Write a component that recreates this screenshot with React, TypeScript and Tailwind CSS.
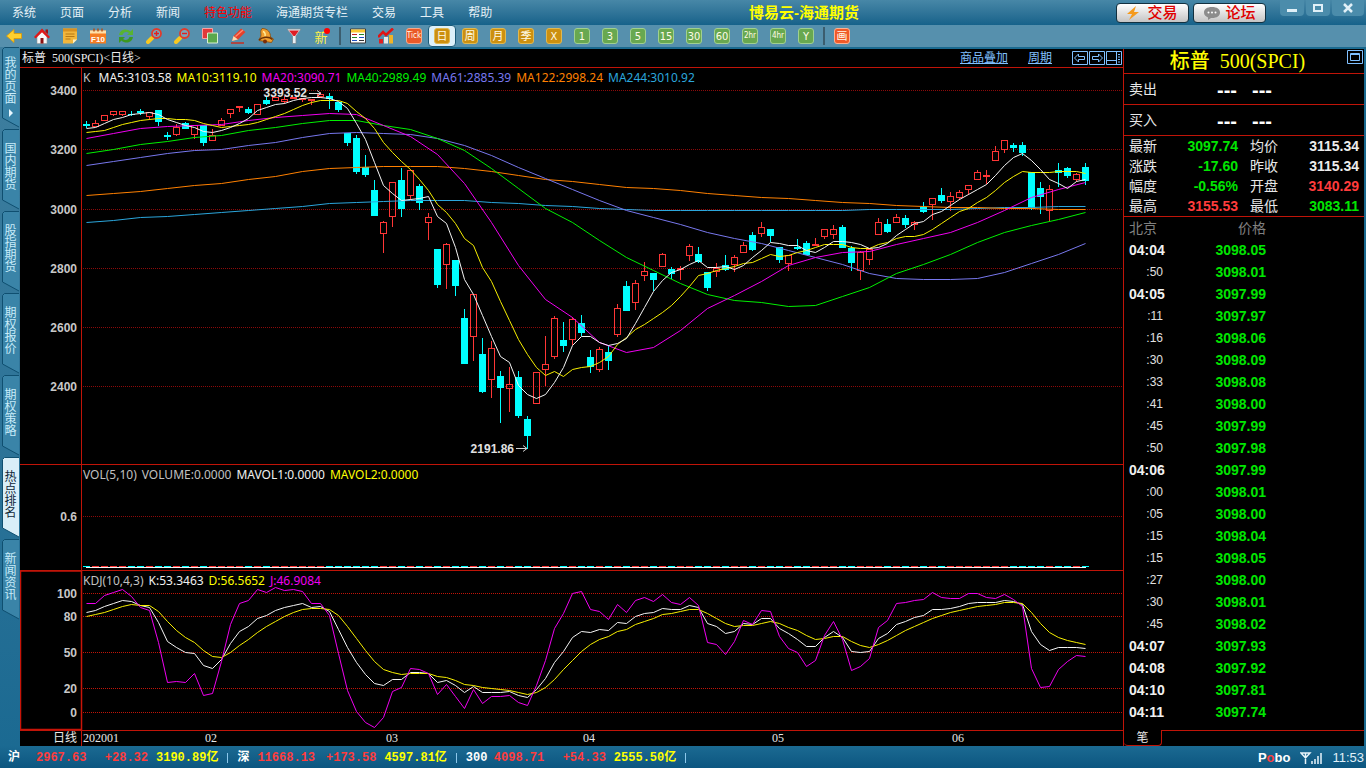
import type { ReactNode } from 'react'

const MENU = ['系统', '页面', '分析', '新闻', '特色功能', '海通期货专栏', '交易', '工具', '帮助']
const SIDE_TABS = ['我的页面', '国内期货', '股指期货', '期权报价', '期权策略', '热点排名', '新闻资讯']

// [body top, body bottom, high, low, rising]
const CANDLES: number[][] = [
  [124, 126, 121, 128, 0], [123, 126, 120, 126, 1], [115, 120, 115, 120, 1], [111, 114, 111, 115, 1],
  [111, 114, 111, 115, 1], [114, 115, 111, 116, 0], [111, 113, 109, 115, 0], [112, 116, 112, 119, 1],
  [110, 122, 110, 126, 0], [135, 137, 132, 140, 0], [127, 134, 124, 135, 1], [123, 129, 122, 129, 0],
  [125, 134, 125, 138, 1], [125, 143, 125, 146, 0], [135, 140, 129, 140, 1], [120, 125, 118, 125, 1],
  [109, 113, 109, 117, 1], [106, 107, 106, 111, 1], [109, 113, 107, 114, 0], [104, 114, 104, 114, 1],
  [100, 104, 97, 105, 0], [97, 100, 97, 100, 1], [99, 101, 96, 103, 1], [97, 98, 97, 98, 1],
  [98, 99, 98, 101, 1], [99, 100, 99, 104, 1], [94, 96, 92, 97, 1], [96, 99, 93, 109, 0],
  [102, 110, 102, 112, 0], [133, 143, 133, 146, 0], [138, 172, 135, 174, 0], [167, 175, 155, 177, 0],
  [190, 216, 180, 216, 0], [222, 233, 221, 252, 1], [182, 216, 182, 226, 1], [180, 209, 168, 217, 0],
  [170, 195, 170, 199, 1], [186, 203, 184, 210, 0], [217, 222, 213, 239, 1], [249, 285, 249, 288, 0],
  [244, 264, 243, 288, 1], [260, 286, 260, 296, 0], [318, 364, 309, 364, 0], [294, 336, 294, 360, 1],
  [354, 392, 338, 393, 0], [348, 379, 341, 397, 1], [376, 388, 371, 423, 0], [384, 388, 367, 411, 1],
  [377, 416, 371, 418, 0], [419, 436, 416, 449, 0], [372, 403, 372, 403, 1], [364, 369, 336, 385, 1],
  [318, 356, 316, 358, 1], [340, 346, 322, 352, 0], [319, 339, 317, 344, 1], [323, 333, 315, 336, 0],
  [357, 367, 350, 373, 0], [349, 369, 347, 371, 1], [352, 361, 345, 370, 0], [308, 334, 304, 336, 1],
  [286, 311, 281, 311, 0], [283, 302, 280, 309, 1], [271, 275, 262, 280, 1], [273, 280, 273, 291, 0],
  [254, 266, 253, 266, 1], [269, 274, 267, 279, 0], [268, 269, 266, 279, 1], [246, 255, 244, 260, 1],
  [254, 262, 247, 263, 0], [272, 288, 272, 291, 0], [268, 271, 263, 276, 1], [265, 270, 255, 271, 0],
  [257, 264, 255, 271, 1], [245, 252, 242, 252, 1], [235, 250, 232, 251, 0], [227, 233, 222, 236, 1],
  [229, 236, 229, 242, 0], [247, 260, 247, 263, 0], [255, 263, 255, 270, 1], [247, 249, 239, 250, 0],
  [243, 255, 241, 255, 0], [244, 245, 238, 245, 1], [229, 236, 229, 238, 1], [229, 234, 225, 238, 1],
  [227, 248, 225, 248, 0], [248, 263, 246, 271, 0], [252, 270, 251, 279, 1], [249, 259, 249, 264, 1],
  [222, 234, 218, 234, 1], [224, 232, 219, 233, 0], [217, 222, 214, 222, 1], [218, 225, 215, 228, 0],
  [222, 224, 221, 229, 1], [207, 212, 202, 213, 0], [198, 204, 198, 219, 1], [195, 201, 188, 203, 0],
  [196, 201, 192, 210, 1], [192, 197, 190, 199, 1], [185, 189, 185, 194, 1], [172, 179, 170, 179, 1],
  [175, 176, 170, 183, 1], [151, 160, 146, 160, 1], [140, 149, 140, 152, 1], [145, 148, 143, 152, 0],
  [145, 153, 142, 156, 0], [172, 209, 172, 210, 0], [188, 197, 182, 214, 0], [189, 210, 185, 220, 1],
  [170, 173, 163, 187, 0], [168, 176, 167, 178, 0], [174, 179, 173, 181, 1], [167, 181, 163, 185, 0],
]

const MA5 = [
  128, 127, 123, 119, 117, 114, 113, 112, 114, 119, 122, 125, 127, 131, 132, 130, 127, 123, 118, 110, 107, 104, 103,
  100, 98, 97, 97, 98, 101, 108, 123, 139, 162, 185, 193, 200, 199, 198, 196, 216, 223, 247, 279, 294, 315, 336, 356,
  362, 385, 394, 398, 394, 382, 367, 345, 336, 336, 342, 345, 343, 338, 323, 307, 291, 280, 272, 269, 264, 260, 267,
  267, 266, 269, 265, 257, 250, 242, 243, 245, 245, 250, 252, 247, 241, 241, 242, 244, 248, 247, 243, 235, 229, 223,
  221, 214, 211, 205, 199, 194, 189, 184, 175, 165, 157, 153, 160, 169, 179, 183, 188, 181, 179,
]
const MA10 = [
  132, 131, 130, 127, 124, 122, 120, 119, 118, 118, 119, 119, 120, 123, 125, 127, 126, 125, 124, 122, 119, 116, 113,
  109, 105, 102, 100, 100, 100, 103, 111, 118, 128, 142, 152, 161, 169, 179, 190, 204, 212, 223, 238, 245, 267, 281,
  301, 320, 339, 354, 367, 375, 371, 376, 369, 367, 366, 362, 356, 344, 337, 329, 324, 318, 312, 305, 296, 286, 275,
  273, 270, 268, 266, 263, 262, 258, 254, 256, 255, 252, 250, 247, 244, 244, 244, 247, 248, 248, 244, 242, 238, 236,
  236, 234, 229, 223, 217, 211, 208, 202, 197, 190, 182, 176, 171, 172, 172, 172, 171, 171, 171, 173,
]
// slow averages, one value every third day
const MA20 = [
  138, 133, 128, 126, 125, 124, 120, 117, 115, 113, 114, 125, 136, 154, 183, 222, 265, 299, 317, 342, 352, 347, 330,
  308, 295, 281, 265, 257, 252, 251, 244, 238, 232, 222, 210, 197, 189, 182,
]
const MA40 = [
  153, 149, 144, 141, 137, 135, 130, 127, 123, 120, 120, 125, 129, 138, 150, 168, 188, 208, 222, 240, 257, 270, 283,
  294, 300, 302, 306, 305, 296, 287, 273, 264, 254, 242, 232, 225, 219, 212,
]
const MA61 = [
  165, 161, 157, 153, 150, 149, 145, 142, 137, 133, 132, 133, 134, 138, 145, 155, 167, 178, 189, 200, 210, 217, 224,
  232, 238, 243, 250, 257, 264, 273, 278, 279, 279, 278, 272, 263, 254, 243,
]
const MA122 = [
  195, 193, 191, 188, 185, 183, 179, 176, 171, 168, 167, 166, 166, 166, 168, 171, 175, 179, 181, 184, 187, 188, 190,
  193, 195, 197, 198, 200, 202, 203, 205, 206, 207, 207, 208, 208, 209, 209,
]
const MA244 = [
  222, 220, 217, 216, 214, 212, 210, 208, 206, 203, 202, 201, 200, 200, 200, 202, 203, 205, 206, 208, 209, 210, 210,
  210, 210, 210, 210, 210, 210, 209, 209, 209, 209, 208, 207, 207, 206, 206,
]

const KDJ_K = [
  612, 610, 606, 603, 600, 601, 605, 607, 622, 641, 647, 652, 653, 665, 668, 659, 643, 631, 626, 618, 615, 610, 607,
  605, 603, 607, 606, 611, 629, 647, 662, 674, 683, 685, 679, 679, 672, 672, 673, 682, 680, 685, 692, 686, 692, 692,
  692, 691, 695, 697, 689, 678, 662, 651, 637, 631, 632, 629, 630, 622, 623, 616, 613, 612, 608, 609, 609, 605, 607,
  623, 626, 633, 631, 623, 624, 618, 618, 628, 633, 639, 646, 646, 637, 631, 637, 651, 652, 651, 638, 633, 624, 621,
  617, 615, 609, 609, 608, 606, 603, 602, 602, 602, 600, 601, 604, 631, 644, 650, 647, 647, 647, 648,
]
const KDJ_D = [
  616, 614, 612, 609, 606, 604, 605, 605, 611, 621, 630, 637, 642, 650, 656, 657, 652, 645, 639, 632, 626, 621, 616,
  612, 609, 608, 608, 609, 615, 626, 638, 650, 661, 669, 672, 674, 673, 673, 673, 676, 677, 680, 684, 685, 687, 688,
  689, 690, 692, 694, 692, 687, 679, 669, 660, 651, 644, 639, 636, 631, 629, 624, 621, 618, 614, 613, 611, 609, 609,
  613, 618, 623, 626, 625, 625, 623, 621, 623, 627, 630, 635, 639, 638, 636, 636, 641, 645, 647, 644, 640, 635, 630,
  626, 622, 618, 615, 612, 610, 608, 606, 605, 604, 602, 602, 603, 612, 623, 632, 637, 640, 642, 644,
]
const KDJ_J = [
  603, 603, 595, 592, 589, 596, 607, 610, 642, 682, 681, 682, 673, 695, 693, 661, 624, 603, 600, 589, 592, 587, 590,
  589, 591, 603, 603, 615, 653, 690, 711, 722, 727, 717, 691, 687, 668, 669, 673, 694, 684, 696, 708, 689, 703, 696,
  696, 695, 702, 705, 685, 660, 628, 613, 593, 591, 609, 611, 619, 604, 612, 600, 597, 601, 594, 602, 604, 597, 605,
  642, 644, 654, 641, 620, 624, 610, 611, 636, 648, 652, 666, 660, 635, 621, 639, 670, 666, 658, 627, 620, 603, 602,
  600, 599, 592, 597, 598, 598, 593, 593, 597, 598, 594, 599, 606, 668, 687, 686, 669, 661, 655, 656,
]

const QUOTES = [
  ['最新', '3097.74', 'g', '均价', '3115.34', 'w'],
  ['涨跌', '-17.60', 'g', '昨收', '3115.34', 'w'],
  ['幅度', '-0.56%', 'g', '开盘', '3140.29', 'r'],
  ['最高', '3155.53', 'r', '最低', '3083.11', 'g'],
]
const TONE: Record<string, string> = { g: 'text-[#00e600]', r: 'text-[#ff3c3c]', w: 'text-[#ececec]' }

const TICKS = [
  ['04:04', '3098.05'], [':50', '3098.01'], ['04:05', '3097.99'], [':11', '3097.97'], [':16', '3098.06'],
  [':30', '3098.09'], [':33', '3098.08'], [':41', '3098.00'], [':45', '3097.99'], [':50', '3097.98'],
  ['04:06', '3097.99'], [':00', '3098.01'], [':05', '3098.00'], [':15', '3098.04'], [':15', '3098.05'],
  [':27', '3098.00'], [':30', '3098.01'], [':45', '3098.02'], ['04:07', '3097.93'], ['04:08', '3097.92'],
  ['04:10', '3097.81'], ['04:11', '3097.74'],
]

function Line({ data, color, step = 1 }: { data: number[]; color: string; step?: number }) {
  const points = data.map((y, i) => `${86.5 + i * 9 * step},${y + 0.5}`).join(' ')
  return <polyline points={points} fill="none" stroke={color} strokeWidth="1" />
}

function Grid({ rows, color }: { rows: [number, string][]; color: string }) {
  return (
    <g>
      {rows.map(([y, label]) => (
        <g key={label}>
          <path d={`M83 ${y + 0.5}H1122`} stroke={color} strokeDasharray="1 1" shapeRendering="crispEdges" />
          <text x="77" y={y + 5} textAnchor="end" fontSize="12" fontWeight="700" fill="#c8c8c8">{label}</text>
        </g>
      ))}
    </g>
  )
}

function Pane({ viewBox, label, children }: { viewBox: string; label: string; children: ReactNode }) {
  return (
    <svg viewBox={viewBox} preserveAspectRatio="none" className="block size-full" role="img" aria-label={label}>
      {children}
    </svg>
  )
}

function Legend({ items }: { items: [string, string][] }) {
  return (
    <div className="absolute left-[63px] top-0.5 flex gap-[5px] whitespace-nowrap font-['Noto_Sans',sans-serif] text-[12px] leading-4">
      {items.map(([text, tone]) => (
        <span key={text} className={tone}>{text}</span>
      ))}
    </div>
  )
}

const TOOL_ICONS: [string, ReactNode][] = [
  ['返回', <path d="M.5 8 8 1.5v4h7.5v5H8v4z" fill="#ffd02e" stroke="#e09a00" strokeWidth=".8" />],
  ['首页', <>
    <path d="M3 8v7.500h10V8L8 3.500z" fill="#f8f8f8" stroke="#999" strokeWidth=".6" />
    <path d="M11.500 1.500H14V6l-2.500-2z" fill="#a01010" />
    <path d="M0 9 8 .5 16 9l-1.600 1.500L8 4.300l-6.400 6.200z" fill="#e01818" />
    <path d="M6.500 10h3v5.500h-3z" fill="#8a1010" />
  </>],
  ['公告', <>
    <path d="M1 .5h14v11L11 15.500H1z" fill="#f2b63c" />
    <path d="M1 .5h14v3H1z" fill="#d89020" />
    <path d="M3.500 6h9M3.500 8.500h9M3.500 11h5" stroke="#b87812" />
    <path d="M15 11.500h-4v4z" fill="#fff0c0" />
  </>],
  ['F10', <>
    <path d="M0 2.500h16v13H0z" fill="#f57c22" />
    <path d="M0 2.500h16v3H0z" fill="#ffe0a8" />
    <path d="M4 .5v3M8 .5v3M12 .5v3" stroke="#b84a10" strokeWidth="1.400" />
    <text x="8" y="13.500" textAnchor="middle" fontSize="8" fontWeight="700" fill="#fff">F10</text>
  </>],
  ['刷新', <>
    <path d="M1 7c1-6 8-7 11.500-3.500L15 1v6H9l2-2C8.500 3 5.500 4 4.500 7z" fill="#58b430" />
    <path d="M15 9c-1 6-8 7-11.500 3.500L1 15V9h6l-2 2c2.500 2 5.500 1 6.500-2z" fill="#3c9820" />
  </>],
  ['放大', <>
    <path d="m6 10-4 4" stroke="#f8c820" strokeWidth="4" strokeLinecap="round" />
    <circle cx="10.500" cy="5.500" r="4.500" fill="#7aa6ba" stroke="#e23a2a" strokeWidth="1.800" />
    <path d="M8 5.500h5M10.500 3v5" stroke="#e22020" strokeWidth="1.400" />
  </>],
  ['缩小', <>
    <path d="m6 10-4 4" stroke="#f8c820" strokeWidth="4" strokeLinecap="round" />
    <circle cx="10.500" cy="5.500" r="4.500" fill="#7aa6ba" stroke="#e23a2a" strokeWidth="1.800" />
    <path d="M8 5.500h5" stroke="#e22020" strokeWidth="1.400" />
  </>],
  ['叠加', <>
    <path d="M.5.5h10v10H.5z" fill="#e03a3a" stroke="#f8a0a0" />
    <path d="M5.500 5h10v10h-10z" fill="#5aa84c" stroke="#d8f0d0" />
  </>],
  ['画线', <>
    <path d="m2 13 1.500-5L11 .5 15.500 4 8 11.500z" fill="#e6402a" />
    <path d="m2 13 1.500-5L8 11.500z" fill="#f8dcb0" />
    <path d="M5.500 8.500 13 2" stroke="#ff8a70" strokeWidth="1.400" />
    <path d="M1 15h13" stroke="#d02818" strokeWidth="1.400" />
  </>],
  ['预警', <>
    <path d="M4 .5c6 0 8.500 4 8.500 8.500l3 2-2 3.500L1 12.500c0-2 2-3 2-5.500S2 3 4 .5z" fill="#f0a030" stroke="#8a4a08" strokeWidth=".8" />
    <path d="M1 12c3-3 10-4 13.500-.5" stroke="#6b3206" fill="none" strokeWidth="1.600" />
    <circle cx="7" cy="13.500" r="2" fill="#7a2e08" />
    <path d="M5 3.500c1.500.5 2.500 2 2 4.500" stroke="#fff0a0" fill="none" strokeWidth="1.400" />
  </>],
  ['筛选', <>
    <path d="M1 1h14l-5 7v7.500H6.500V8z" fill="#e8eef2" stroke="#7a8890" strokeWidth=".8" />
    <path d="M3 2.500h10L9 8H7.500z" fill="#e01c24" />
  </>],
  ['新', <>
    <text x="7" y="14" textAnchor="middle" fontSize="13" fill="#fff04a">新</text>
    <circle cx="13" cy="3" r="3" fill="#f00" />
  </>],
]

const VIEW_ICONS: [string, ReactNode][] = [
  ['报价', <>
    <path d="M.5 1h15v14H.5z" fill="#fff" stroke="#3a3a3a" />
    <path d="M1 1.500h14v3H1z" fill="#f8c830" />
    <path d="M2 6.500h5" stroke="#c02020" />
    <path d="M9 6.500h5M2 9.500h5" stroke="#208820" />
    <path d="M9 9.500h5M2 12.500h5" stroke="#2050c0" />
    <path d="M9 12.500h5" stroke="#333" />
  </>],
  ['走势', <>
    <path d="M1 11h4v4.500H1z" fill="#e02020" />
    <path d="M6 9h4v6.500H6z" fill="#e8e8e8" />
    <path d="M11 7h4v8.500h-4z" fill="#f0b428" />
    <path d="m0 9 5-5 3 3 7-6.500" fill="none" stroke="#e01414" strokeWidth="2.600" />
  </>],
]

const PERIODS = ['日', '周', '月', '季', 'X', '1', '3', '5', '15', '30', '60', '2hr', '4hr', 'Y']

function ToolButton({ name, children }: { name: string; children: ReactNode }) {
  return (
    <button type="button" aria-label={name} className="flex w-7 shrink-0 items-center justify-center">
      <svg viewBox="0 0 16 16" className="size-4">{children}</svg>
    </button>
  )
}

function Badge({ text, tone }: { text: string; tone: string }) {
  return (
    <span className={`flex size-4 items-center justify-center overflow-hidden rounded-[3px] border font-['DejaVu_Sans_Condensed','Noto_Sans_CJK_SC',sans-serif] leading-none text-[#fffbe8] ${tone} ${text.length > 2 ? 'text-[8px]' : 'text-[11px]'}`}>
      {text}
    </span>
  )
}

function TitleBar() {
  return (
    <header className="flex h-[25px] shrink-0 items-center bg-linear-to-b from-[#4787a7] to-[#15628a]">
      <nav className="ml-3 flex gap-6">
        {MENU.map((m) => (
          <a key={m} href="#" className={`text-[12px] leading-4 ${m === '特色功能' ? 'text-[#ff0000]' : 'text-[#e4f0f6]'}`}>{m}</a>
        ))}
      </nav>
      <h1 className="flex-1 text-center text-[15px] font-bold leading-5 text-[#ffff00]">博易云-海通期货</h1>
      <div className="flex gap-1">
        <button type="button" className="flex h-5 w-[73px] items-center justify-center gap-2 rounded border border-[#12303f] bg-linear-to-b from-white to-[#c4c4c4] text-[15px] font-medium leading-4 text-[#e00000]">
          <svg viewBox="0 0 12 14" className="h-3.5 w-3"><path d="M9 0 0 8h5l-3 6 10-8H7z" fill="#f59a1c" /></svg>
          交易
        </button>
        <button type="button" className="flex h-5 w-[73px] items-center justify-center gap-1 rounded border border-[#12303f] bg-linear-to-b from-white to-[#c4c4c4] text-[15px] font-medium leading-4 text-[#e00000]">
          <svg viewBox="0 0 18 14" className="h-3.5 w-[18px]">
            <path d="M9 1c5 0 8 2.200 8 5.500S14 12 9 12H8l-3 2v-2.600C2.500 10.500 1 9 1 6.500 1 3.200 4 1 9 1z" fill="#8c8c8c" />
            <circle cx="5.500" cy="6.500" r="1" fill="#fff" />
            <circle cx="9" cy="6.500" r="1" fill="#fff" />
            <circle cx="12.500" cy="6.500" r="1" fill="#fff" />
          </svg>
          论坛
        </button>
      </div>
      <div className="ml-3.5 mr-0.5 flex gap-0.5 self-start">
        <button type="button" aria-label="最小化" className="flex h-4 w-6 items-center justify-center rounded-b bg-[#4b8cab]">
          <svg viewBox="0 0 12 12" className="size-3"><path d="M1 7h10v3H1z" fill="#e0f0f8" /></svg>
        </button>
        <button type="button" aria-label="最大化" className="flex h-4 w-6 items-center justify-center rounded-b bg-[#4b8cab]">
          <svg viewBox="0 0 12 12" className="size-3"><path d="M2 3h8v6H2z" fill="none" stroke="#e0f0f8" strokeWidth="2" /></svg>
        </button>
        <button type="button" aria-label="关闭" className="flex h-4 w-8 items-center justify-center rounded-b bg-[#4b8cab]">
          <svg viewBox="0 0 12 12" className="size-3"><path d="m2 2 8 8M10 2l-8 8" stroke="#e0f0f8" strokeWidth="2.500" /></svg>
        </button>
      </div>
    </header>
  )
}

function Toolbar() {
  return (
    <div className="flex h-6 shrink-0 border-b-2 border-[#1a6a90] bg-[#5690ad]">
      {TOOL_ICONS.map(([name, icon]) => <ToolButton key={name} name={name}>{icon}</ToolButton>)}
      <span className="mx-[3px] my-0.5 w-0.5 bg-[#3b5d6e]" />
      {VIEW_ICONS.map(([name, icon]) => <ToolButton key={name} name={name}>{icon}</ToolButton>)}
      <button type="button" className="flex w-7 items-center justify-center">
        <Badge text="Tick" tone="border-[#f8a888] bg-[#ea5a28]" />
      </button>
      {PERIODS.map((p, i) => (
        <button
          key={p}
          type="button"
          className={`flex w-7 items-center justify-center ${i === 0 ? 'rounded-sm border border-[#1a5a78] bg-[#dcf0fa]' : ''}`}
        >
          <Badge text={p} tone={i < 5 ? 'border-[#e0b850] bg-[#cc9010]' : 'border-[#a0d090] bg-[#68a850]'} />
        </button>
      ))}
      <span className="mx-[3px] my-0.5 w-0.5 bg-[#3b5d6e]" />
      <button type="button" className="flex w-7 items-center justify-center">
        <Badge text="画" tone="border-[#ffb090] bg-[#f05a28]" />
      </button>
    </div>
  )
}

function SideTabs() {
  return (
    <nav className="-mt-0.5 flex w-5 shrink-0 flex-col bg-linear-to-b from-[#3f7f9f] to-[#1b6a92] pl-0.5">
      {SIDE_TABS.map((tab, i) => {
        const active = tab === '热点排名'
        return (
          <button key={tab} type="button" className="relative h-[82px] w-[17px] shrink-0">
            <svg viewBox="0 0 17 82" className="absolute inset-0 size-full">
              <path
                d="M17 .5H2.500l-2 2V71L17 80"
                fill={active ? '#d9eef8' : '#3a84a8'}
                stroke="#0f4f70"
              />
            </svg>
            <span className={`relative mx-auto flex h-full w-3 flex-col items-center text-[12px] leading-3 ${i === 0 ? 'pt-2.5' : 'pt-3.5'} ${active ? 'text-[#102838]' : 'text-[#c8ecfa]'}`}>
              {tab}
              {i === 0 && <svg viewBox="0 0 6 8" className="mt-1 h-2 w-1.5"><path d="m1 0 4 4-4 4z" fill="#e8f8ff" /></svg>}
            </span>
          </button>
        )
      })}
    </nav>
  )
}

function PricePane() {
  return (
    <div className="relative min-h-0 border-b border-[#c01408]">
      <Pane viewBox="20 68 1103 396" label="日线 K线图">
        <path d="M81.500 68V464" stroke="#c01408" />
        <Grid color="#8c0a0a" rows={[[90, '3400'], [149, '3200'], [209, '3000'], [268, '2800'], [327, '2600'], [386, '2400']]} />
        <g shapeRendering="crispEdges">
          {CANDLES.map(([top, bottom, high, low, up], i) => {
            const x = 86 + i * 9
            return up ? (
              <g key={i} stroke="#ff3636" fill="none">
                <path d={`M${x + 0.5} ${high}V${top}M${x + 0.5} ${bottom}V${low + 1}`} />
                <rect x={x - 2.5} y={top + 0.5} width="6" height={Math.max(bottom - top, 1)} />
              </g>
            ) : (
              <g key={i} fill="#00ffff">
                <rect x={x} y={high} width="1" height={low - high} />
                <rect x={x - 3} y={top} width="7" height={bottom - top} />
              </g>
            )
          })}
        </g>
        <Line data={MA244} step={3} color="#2ba6dc" />
        <Line data={MA122} step={3} color="#ff8000" />
        <Line data={MA61} step={3} color="#7878ee" />
        <Line data={MA40} step={3} color="#00f000" />
        <Line data={MA20} step={3} color="#f000f0" />
        <Line data={MA10} color="#f8f000" />
        <Line data={MA5} color="#f4f4f4" />
        <g fontSize="12" fontWeight="700" fill="#e0e0e0" textAnchor="end">
          <text x="307" y="97">3393.52</text>
          <text x="514" y="453">2191.86</text>
        </g>
        <path d="M309 93.500h12m-4-3 4 3-4 3M516 448.500h11m-4-3 4 3-4 3" fill="none" stroke="#d0d0d0" />
      </Pane>
      <Legend
        items={[
          ['K\u00a0', 'text-[#c0c0c0]'],
          ['MA5:3103.58', 'text-[#f0f0f0]'],
          ['MA10:3119.10', 'text-[#ffff00]'],
          ['MA20:3090.71', 'text-[#f000f0]'],
          ['MA40:2989.49', 'text-[#00f000]'],
          ['MA61:2885.39', 'text-[#7878f0]'],
          ['MA122:2998.24', 'text-[#ff8000]'],
          ['MA244:3010.92', 'text-[#2ba6dc]'],
        ]}
      />
    </div>
  )
}

function VolumePane() {
  return (
    <div className="relative min-h-0 border-b border-[#c01408]">
      <Pane viewBox="20 465 1103 105" label="成交量">
        <path d="M81.500 465V570" stroke="#c01408" />
        <Grid color="#8c0a0a" rows={[[516, '0.6']]} />
        <g shapeRendering="crispEdges">
          <path d="M86 567.500H1086" stroke="#f4f4f4" />
          {CANDLES.map((c, i) => (
            <rect key={i} x={83 + i * 9} y="566" width="7" height="1" fill={c[4] ? '#ff3636' : '#00ffff'} />
          ))}
        </g>
      </Pane>
      <Legend
        items={[
          ['VOL(5,10)', 'text-[#c0c0c0]'],
          ['VOLUME:0.0000', 'text-[#c0c0c0]'],
          ['MAVOL1:0.0000', 'text-[#f0f0f0]'],
          ['MAVOL2:0.0000', 'text-[#ffff00]'],
        ]}
      />
    </div>
  )
}

function KdjPane() {
  return (
    <div className="relative min-h-0 border-b border-[#c01408]">
      <Pane viewBox="20 571 1103 159" label="KDJ">
        <rect x="20.500" y="571" width="61" height="158.500" fill="none" stroke="#c81408" strokeWidth="1.500" />
        <Grid color="#c01408" rows={[[593, '100'], [616, '80'], [652, '50'], [688, '20'], [712, '0']]} />
        <Line data={KDJ_K} color="#f4f4f4" />
        <Line data={KDJ_D} color="#f8f000" />
        <Line data={KDJ_J} color="#f000f0" />
      </Pane>
      <Legend
        items={[
          ['KDJ(10,4,3)', 'text-[#c0c0c0]'],
          ['K:53.3463', 'text-[#f0f0f0]'],
          ['D:56.5652', 'text-[#ffff00]'],
          ['J:46.9084', 'text-[#f000f0]'],
        ]}
      />
    </div>
  )
}

function ChartArea() {
  return (
    <main className="grid min-w-0 flex-1 grid-rows-[19px_minmax(0,397fr)_minmax(0,106fr)_minmax(0,160fr)_15px]">
      <div className="flex items-center border-b border-[#c01408] pl-0.5 pr-px text-[12px] leading-4">
        <h2 className="flex-1 whitespace-pre font-['Liberation_Serif','Noto_Sans_CJK_SC',serif] text-[#ececec]">标普  500(SPCI)&lt;日线&gt;</h2>
        <a href="#" className="mr-5 text-[#80c0ff] underline">商品叠加</a>
        <a href="#" className="mr-5 text-[#80c0ff] underline">周期</a>
        <div className="flex gap-px">
          <button type="button" aria-label="前移">
            <svg viewBox="0 0 16 14" className="h-3.5 w-4" fill="none" stroke="#80c0ff"><path d="M.5.5h15v13H.5zM2.500 7l4-4v2.500h6v3h-6V11z" /></svg>
          </button>
          <button type="button" aria-label="后移">
            <svg viewBox="0 0 16 14" className="h-3.5 w-4" fill="none" stroke="#80c0ff"><path d="M.5.5h15v13H.5zM13.500 7l-4-4v2.500h-6v3h6V11z" /></svg>
          </button>
          <button type="button" aria-label="侧栏">
            <svg viewBox="0 0 16 14" className="h-3.5 w-4" fill="none" stroke="#80c0ff"><path d="M.5.5h15v13H.5zM10.500 1v12M1 9.500h9M12 3.500h2M12 6h2M12 8.500h2M12 11h2" /></svg>
          </button>
        </div>
      </div>
      <PricePane />
      <VolumePane />
      <KdjPane />
      <Pane viewBox="20 731 1103 15" label="日期">
        <path d="M81.500 731V746" stroke="#c01408" />
        <g fontSize="12" fill="#e8e8e8" className="font-['Liberation_Serif','Noto_Sans_CJK_SC',serif]">
          <text x="53" y="742">日线</text>
          <text x="83" y="742">202001</text>
          <text x="205" y="742">02</text>
          <text x="386" y="742">03</text>
          <text x="583" y="742">04</text>
          <text x="772" y="742">05</text>
          <text x="952" y="742">06</text>
        </g>
      </Pane>
    </main>
  )
}

function OrderRow({ label }: { label: string }) {
  return (
    <div className="flex h-[31px] items-center border-b border-[#c01408] pl-[5px] text-[14px] text-[#e8e8e8]">
      <span className="w-[88px]">{label}</span>
      <span className="w-[35px] pt-0.5 text-[20px] font-bold leading-5 text-white">---</span>
      <span className="pt-0.5 text-[20px] font-bold leading-5 text-white">---</span>
    </div>
  )
}

function QuotePanel() {
  return (
    <aside className="flex w-[241px] shrink-0 flex-col border-l border-[#c01408]">
      <div className="flex h-[25px] items-center border-b border-[#c01408]">
        <h2 className="flex-1 whitespace-pre pl-1 text-center font-['Liberation_Serif','Noto_Sans_CJK_SC',serif] text-[20px] font-medium leading-6 text-[#ffff00]">标普  500(SPCI)</h2>
        <button type="button" aria-label="还原" className="mr-px mt-px self-start">
          <svg viewBox="0 0 16 14" className="h-3.5 w-4" fill="none" stroke="#80c0ff"><path d="M.5.5h15v13H.5zM3.500 3.500h9v7h-9zM3 4.500h10" /></svg>
        </button>
      </div>
      <OrderRow label="卖出" />
      <OrderRow label="买入" />
      <table className="w-full table-fixed border-b border-[#c01408] text-[14px] leading-5">
        <tbody>
          {QUOTES.map(([l1, v1, t1, l2, v2, t2]) => (
            <tr key={l1} className="h-5">
              <th scope="row" className="w-12 p-0 pl-[5px] text-left font-normal text-[#e8e8e8]">{l1}</th>
              <td className={`w-[66px] p-0 text-right font-bold ${TONE[t1]}`}>{v1}</td>
              <th scope="row" className="w-[54px] p-0 pl-3 text-left font-normal text-[#e8e8e8]">{l2}</th>
              <td className={`p-0 pr-[5px] text-right font-bold ${TONE[t2]}`}>{v2}</td>
            </tr>
          ))}
        </tbody>
      </table>
      <div className="min-h-0 flex-1 overflow-hidden">
        <table className="w-full table-fixed text-[14px] leading-5">
          <thead>
            <tr className="h-[22px] text-[#808080]">
              <th className="w-[45px] p-0 pl-[5px] text-left font-normal">北京</th>
              <th className="w-[97px] p-0 text-right font-normal">价格</th>
              <th className="p-0" />
            </tr>
          </thead>
          <tbody>
            {TICKS.map(([time, price], i) => (
              <tr key={i} className="h-[22px]">
                {time.length > 3 ? (
                  <td className="p-0 pl-[5px] font-bold text-[#f0f0f0]">{time}</td>
                ) : (
                  <td className="p-0 pr-1.5 text-right text-[12px] text-[#e0e0e0]">{time}</td>
                )}
                <td className="p-0 text-right font-bold text-[#00e600]">{price}</td>
                <td className="p-0" />
              </tr>
            ))}
          </tbody>
        </table>
      </div>
      <div className="flex h-4">
        <button type="button" className="w-[38px] rounded-b-sm border-b border-r border-[#c01408] text-[12px] leading-[14px] text-[#e8e8e8]">笔</button>
        <span className="flex-1 border-t border-[#c01408]" />
      </div>
    </aside>
  )
}

function IndexQuote({ name, price, change, amount, wide }: { name: string; price: string; change: string; amount: string; wide?: boolean }) {
  return (
    <div className="flex items-center">
      <span className={`text-white ${wide ? 'w-5' : 'w-7'}`}>{name}</span>
      <span className={`flex justify-between text-[#ff3c3c] ${wide ? 'w-[119px]' : 'w-28'}`}>
        <span>{price}</span>
        <span>{change}</span>
      </span>
      <span className="ml-2 text-[#ffff00]">{amount}</span>
      <span className="mx-[9px] h-2.5 w-px bg-[#8cc8ec]" />
    </div>
  )
}

function StatusBar() {
  return (
    <footer className="flex h-[22px] shrink-0 items-center bg-linear-to-b from-[#1b6a92] to-[#0c5680] pl-2 pt-0.5 font-['Liberation_Mono','Noto_Sans_CJK_SC',monospace] text-[12px] font-bold leading-4">
      <IndexQuote name="沪" price="2967.63" change="+28.32" amount="3190.89亿" />
      <IndexQuote name="深" price="11668.13" change="+173.58" amount="4597.81亿" wide />
      <IndexQuote name="300" price="4098.71" change="+54.33" amount="2555.50亿" />
      <div className="ml-auto flex items-center gap-2.5 pr-0.5 font-['Liberation_Sans',sans-serif]">
        <span className="text-[13px] text-white">P<span className="text-[#ff4040]">o</span>bo</span>
        <svg viewBox="0 0 22 12" className="h-3 w-[22px]" stroke="#e8f4fa" strokeWidth="1.500" fill="none">
          <path d="M1 1h9L5.500 6zM5.500 1v11M12 12V9M15 12V7M18 12V4M21 12V1" />
        </svg>
        <span className="text-[13px] font-normal text-[#e0f0f8]">11:53</span>
      </div>
    </footer>
  )
}

export default function App() {
  return (
    <div className="flex h-screen min-h-[600px] flex-col overflow-hidden bg-black font-['Liberation_Sans','Noto_Sans_CJK_SC',sans-serif]">
      <TitleBar />
      <Toolbar />
      <div className="flex min-h-0 flex-1 bg-black">
        <SideTabs />
        <ChartArea />
        <QuotePanel />
        <span className="w-0.5 bg-[#1a6a90]" />
      </div>
      <StatusBar />
    </div>
  )
}
